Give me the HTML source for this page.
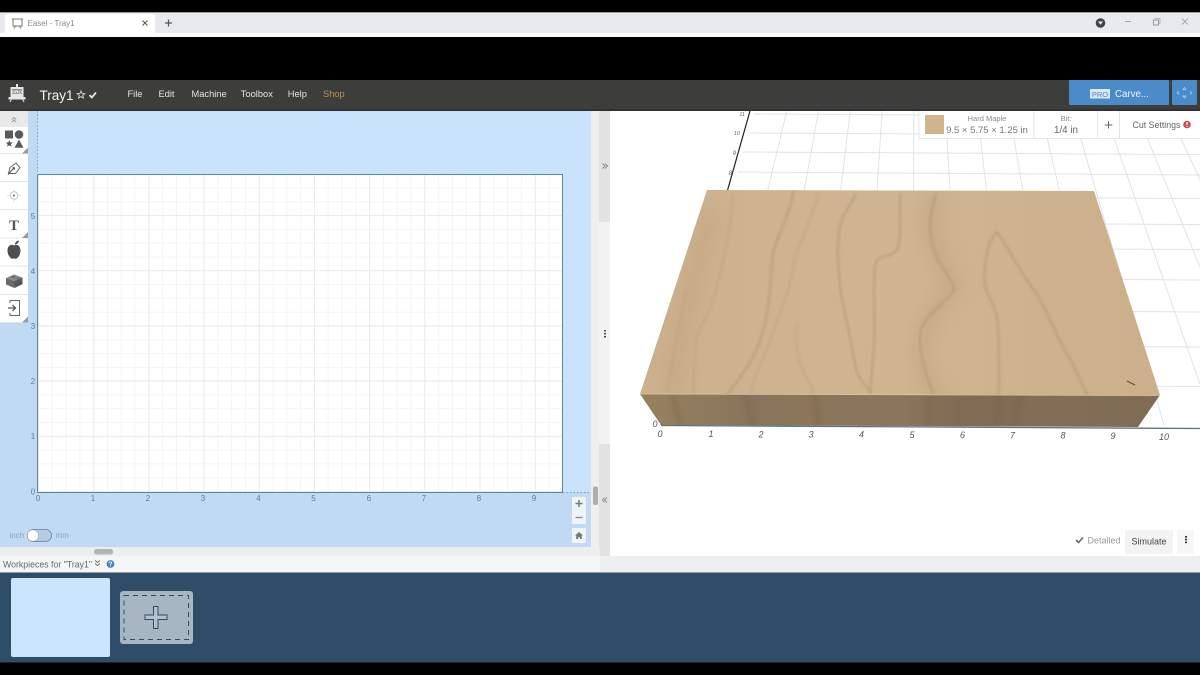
<!DOCTYPE html>
<html>
<head>
<meta charset="utf-8">
<style>
html,body{margin:0;padding:0;background:#000;width:1200px;height:675px;overflow:hidden}
svg{display:block;position:absolute;left:0;top:0}
text{font-family:"Liberation Sans",sans-serif}
#grid{position:absolute;left:38px;top:175px;width:524px;height:317px;background-color:#fff;
background-image:
linear-gradient(to right,#e9ebeb 1px,transparent 1px),
linear-gradient(to top,#e9ebeb 1px,transparent 1px),
linear-gradient(to right,#f4f5f5 1px,transparent 1px),
linear-gradient(to top,#f4f5f5 1px,transparent 1px);
background-size:55.2px 55.2px,55.2px 55.2px,13.8px 13.8px,13.8px 13.8px;
background-position:left bottom;
}
</style>
</head>
<body>
<svg width="1200" height="675" viewBox="0 0 1200 675" xmlns="http://www.w3.org/2000/svg">
<!-- browser chrome -->
<rect x="0" y="0" width="1200" height="12" fill="#000"/>
<rect x="0" y="12" width="1200" height="1.500" fill="#9a9a9c"/>
<rect x="0" y="13" width="1200" height="20" fill="#e8eaed"/>
<rect x="0" y="33" width="1200" height="4" fill="#fff"/>
<path d="M5 33V17q0-3 3-3H152q3 0 3 3V33z" fill="#fff"/>
<path d="M0 33h5V30q0 3-3 3z" fill="#fff"/>
<rect x="13" y="19" width="9" height="7" fill="none" stroke="#777" stroke-width="1"/>
<path d="M14 28.500l1.500-2.500M21 28.500l-1.500-2.500M12 19h11" stroke="#777" stroke-width="1" fill="none"/>
<text x="27.500" y="26" font-size="8" fill="#888">Easel - Tray1</text>
<path d="M142.500 20.500l5 5M147.500 20.500l-5 5" stroke="#555" stroke-width="1"/>
<path d="M168.500 19.500v7M165 23h7" stroke="#555" stroke-width="1.200"/>
<circle cx="1100.500" cy="23" r="4.800" fill="#444"/>
<path d="M1098 21.500h5l-2.500 3.200z" fill="#eee"/>
<path d="M1125 21.500h6" stroke="#aaa" stroke-width="1"/>
<rect x="1153.500" y="20" width="5" height="5" fill="none" stroke="#999" stroke-width="1"/>
<path d="M1155 20v-1.500h5v5h-1.500" fill="none" stroke="#aaa" stroke-width=".8"/>
<path d="M1182 18.500l6 6M1188 18.500l-6 6" stroke="#aaa" stroke-width="1"/>

<!-- app header -->
<rect x="0" y="80" width="1200" height="30" fill="#3d3d3b"/>
<rect x="0" y="109.500" width="1200" height="1.500" fill="#2c2e30"/>
<g>
<rect x="10.500" y="87" width="13" height="10" fill="#e6e6e6"/>
<rect x="12" y="89" width="10" height="5" fill="#8d8d8d"/>
<rect x="16" y="84" width="2" height="3" fill="#e6e6e6"/>
<path d="M9 97.500h16v1.500H9zM11.500 99l-1.500 3M22.500 99l1.500 3" stroke="#e6e6e6" stroke-width="1" fill="#e6e6e6"/>
<text x="17" y="93.300" font-size="4.500" font-weight="bold" fill="#fff" text-anchor="middle">PRO</text>
</g>
<text x="39.500" y="100" font-size="13.500" fill="#f4f4f4">Tray1</text>
<path d="M81 91l1.100 2.500 2.700.2-2.100 1.700.7 2.600-2.400-1.400-2.400 1.400.7-2.600-2.100-1.700 2.700-.2z" fill="none" stroke="#ddd" stroke-width=".9"/>
<path d="M89.500 95l2.300 2.500 4.200-5" fill="none" stroke="#e6e6e6" stroke-width="1.800"/>
<g font-size="9.300" fill="#e4e4e4">
<text x="127.500" y="97">File</text>
<text x="158.500" y="97">Edit</text>
<text x="191.500" y="97">Machine</text>
<text x="240.800" y="97">Toolbox</text>
<text x="287.800" y="97">Help</text>
<text x="323" y="97" fill="#b8935a">Shop</text>
</g>
<rect x="1069" y="80" width="100" height="25" rx="1" fill="#4a8bca"/>
<rect x="1090" y="89" width="20" height="9.500" fill="#dbe9f6"/>
<text x="1100" y="96.800" font-size="7.500" fill="#4a85bf" text-anchor="middle">PRO</text>
<text x="1115" y="97" font-size="9.700" fill="#f2f7fc">Carve...</text>
<rect x="1172" y="80" width="25" height="25" rx="1" fill="#4a8bca"/>
<path d="M1184.500 87.500l-1.500 2h3zM1184.500 98l-1.500-2h3zM1179 91l-1.800 1.700 1.800 1.700M1190 91l1.800 1.700-1.800 1.700" fill="none" stroke="#b4d0ea" stroke-width=".8"/>

<!-- left design area -->
<rect x="0" y="111" width="591" height="436" fill="#c0daf3"/>
<rect x="38" y="111" width="553" height="381" fill="#c9e3fd"/>
<rect x="0" y="111" width="28" height="212" fill="#fff"/>
</svg>

<div id="grid"></div>

<svg width="1200" height="675" viewBox="0 0 1200 675" xmlns="http://www.w3.org/2000/svg">
<defs>
<filter id="b1b" x="-10%" y="-10%" width="120%" height="120%"><feGaussianBlur stdDeviation="4"/></filter>
<filter id="b2b" x="-20%" y="-20%" width="140%" height="140%"><feGaussianBlur stdDeviation="25"/></filter>
<filter id="b3" x="-20%" y="-20%" width="140%" height="140%"><feGaussianBlur stdDeviation="2.500"/></filter>
<linearGradient id="topb" x1="0" y1="0" x2="1" y2="0">
<stop offset="0" stop-color="#cdb18e"/><stop offset=".5" stop-color="#d0b591"/><stop offset="1" stop-color="#ccb08c"/>
</linearGradient>
<linearGradient id="frontb" x1="0" y1="0" x2="1" y2="0">
<stop offset="0" stop-color="#97825f"/><stop offset=".12" stop-color="#8e7a5c"/><stop offset=".22" stop-color="#88745a"/><stop offset=".3" stop-color="#8b7659"/><stop offset=".5" stop-color="#8a765b"/><stop offset=".62" stop-color="#806c54"/><stop offset=".78" stop-color="#826e56"/><stop offset="1" stop-color="#7f6c54"/>
</linearGradient>
<clipPath id="topclipb"><polygon points="707,190 1094,191 1160,395 640,394"/></clipPath>
<clipPath id="frontclipb"><polygon points="640,394 1160,395 1138,427 661,425"/></clipPath>
<clipPath id="rightclipb"><rect x="610" y="111" width="590" height="445"/></clipPath>
</defs>

<!-- grid border & labels -->
<rect x="37.500" y="174.500" width="525" height="318" fill="none" stroke="#5a86a5" stroke-width="1"/>
<path d="M37.500 111V175" stroke="#7ba3c4" stroke-width="1" stroke-dasharray="1.500 2" fill="none"/>
<path d="M563 492.500H591" stroke="#7ba3c4" stroke-width="1" stroke-dasharray="1.500 2" fill="none"/>
<g font-size="8" fill="#5d7d98">
<text x="33" y="219" text-anchor="middle">5</text>
<text x="33" y="274" text-anchor="middle">4</text>
<text x="33" y="329" text-anchor="middle">3</text>
<text x="33" y="384" text-anchor="middle">2</text>
<text x="33" y="439" text-anchor="middle">1</text>
<text x="33" y="494.500" text-anchor="middle">0</text>
<text x="38" y="501" text-anchor="middle">0</text>
<text x="93" y="501" text-anchor="middle">1</text>
<text x="148" y="501" text-anchor="middle">2</text>
<text x="203" y="501" text-anchor="middle">3</text>
<text x="258.500" y="501" text-anchor="middle">4</text>
<text x="313.500" y="501" text-anchor="middle">5</text>
<text x="369" y="501" text-anchor="middle">6</text>
<text x="424" y="501" text-anchor="middle">7</text>
<text x="479" y="501" text-anchor="middle">8</text>
<text x="534" y="501" text-anchor="middle">9</text>
</g>

<!-- sidebar -->
<rect x="0" y="111" width="28" height="16" fill="#e9e9e9"/>
<path d="M11.800 119.500l2.200-2 2.200 2M11.800 122l2.200-2 2.200 2" fill="none" stroke="#999" stroke-width=".9"/>
<path d="M0 153.500h28M0 181.500h28M0 209.500h28M0 238h28M0 266h28M0 294.500h28M0 322.500h28" stroke="#e4e4e4" stroke-width="1"/>
<rect x="5" y="130.500" width="8" height="8" fill="#5a5a5c"/>
<circle cx="19" cy="134.500" r="4.300" fill="#5a5a5c"/>
<path d="M9.300 140l1 2.400 2.600.2-2 1.700.6 2.500-2.200-1.400-2.200 1.400.6-2.500-2-1.700 2.600-.2z" fill="#5a5a5c"/>
<path d="M19 139.500l4.500 8.300h-9z" fill="#5a5a5c"/>
<path d="M28 147.500v6h-6zM28 232v6h-6zM28 316.500v6h-6z" fill="#9a9a9a"/>
<path d="M8.500 173.500l1.500-6 6-4.500 4 4.500-4.500 6z" fill="none" stroke="#666" stroke-width="1"/>
<circle cx="13.800" cy="168.300" r="1.300" fill="#555"/>
<path d="M8 174.500l5-5.500" stroke="#555" stroke-width="1"/>
<circle cx="14" cy="195.500" r="3.800" fill="none" stroke="#bbb" stroke-width=".8"/>
<circle cx="14" cy="195.500" r="1" fill="#666"/>
<path d="M7 195.500h3M18 195.500h3M14 189v2.500M14 199.500v2.500" stroke="#ddd" stroke-width=".8"/>
<text x="14" y="230" font-size="15" font-weight="bold" fill="#555" text-anchor="middle" style="font-family:'Liberation Serif',serif">T</text>
<path d="M14 245.500c-2.200-1.300-6.500-.8-6.500 5.300 0 3.800 2.800 8 5 8 .8 0 1-.4 1.500-.4s.7.4 1.500.4c2.200 0 5-4.200 5-8 0-6.100-4.300-6.600-6.500-5.300z" fill="#4f4f51"/>
<path d="M14.800 244.500c.2-2.200 1.800-3.800 4.200-4-.1 2.200-1.800 3.800-4.200 4z" fill="#4f4f51"/>
<path d="M6 278l8-3.500 8.500 3-8 3.500z" fill="#8a8a8c"/>
<path d="M6 278v6.500l8.500 3.500v-7z" fill="#6a6a6c"/>
<path d="M22.500 277.500v6.800l-8 3.700v-7z" fill="#58585a"/>
<path d="M10 277l3-1.200 3 1-3 1.300zM15 278.500l2.500-1 2.500.9-2.500 1z" fill="#6a6a6c"/>
<path d="M10 303v-2.500h9.500v15H10V313" fill="none" stroke="#666" stroke-width="1"/>
<path d="M8 308h7M12.500 305l3 3-3 3" fill="none" stroke="#555" stroke-width="1.300"/>

<!-- toggle -->
<text x="9.500" y="538" font-size="8" fill="#8ba3ba">inch</text>
<rect x="27.500" y="529.500" width="24" height="12" rx="6" fill="#b4cde5" stroke="#6b7d8e" stroke-width=".8"/>
<circle cx="33" cy="535.500" r="5.800" fill="#fff" stroke="#6b7d8e" stroke-width=".5"/>
<text x="55.500" y="538" font-size="8" fill="#8ba3ba">mm</text>

<!-- zoom controls -->
<rect x="572" y="497" width="14" height="27" fill="#eff4f8"/>
<path d="M579 500v7M575.500 503.500h7" stroke="#777" stroke-width="1.500"/>
<path d="M575.500 517.500h7" stroke="#888" stroke-width="1.300"/>
<rect x="572" y="528" width="14" height="15" fill="#eff4f8"/>
<path d="M575 535.500l4-3.500 4 3.500h-1.200v3.500h-2v-2h-1.600v2h-2v-3.500z" fill="#777"/>

<!-- gutter -->
<rect x="591" y="111" width="8" height="445" fill="#efeff0"/>
<rect x="599" y="111" width="11" height="111" fill="#e2e2e2"/>
<rect x="599" y="222" width="11" height="222" fill="#f2f2f2"/>
<rect x="599" y="444" width="11" height="112" fill="#e2e2e2"/>
<rect x="593" y="486.500" width="5" height="18.500" rx="2" fill="#adadad"/>
<path d="M602.500 163.500l2.500 2.500-2.500 2.500M605 163.500l2.500 2.500-2.500 2.500" fill="none" stroke="#888" stroke-width=".9"/>
<path d="M607 497.500l-2.500 2.500 2.500 2.500M604.500 497.500l-2 2.500 2 2.500" fill="none" stroke="#888" stroke-width=".9"/>
<rect x="604" y="330" width="2" height="1.500" fill="#444"/><rect x="604" y="333" width="2" height="1.500" fill="#444"/><rect x="604" y="336" width="2" height="1.500" fill="#444"/>

<!-- right panel -->
<rect x="610" y="111" width="590" height="445" fill="#fff"/>
<g clip-path="url(#rightclipb)">
<g stroke="#dbe5e9" stroke-width="1" fill="none">
<path d="M754 114L1200 116.500"/><path d="M749 133L1200 135.500"/><path d="M743 152L1200 154.500"/><path d="M737 172L1200 175"/><path d="M730 196L1200 198.500"/><path d="M723 222L1200 224.500"/><path d="M716 247L1200 249.500"/><path d="M708 277L1200 280"/><path d="M698 309L1200 312"/><path d="M688 344L1200 347"/><path d="M677 383L1200 386.500"/>
<path d="M786.800 111L711.300 425"/><path d="M818.500 111L761.600 425"/><path d="M850.300 111L811.900 425"/><path d="M882.100 111L862.200 425"/><path d="M913.900 111L912.500 425"/><path d="M945.600 111L962.800 425"/><path d="M977.400 111L1013.100 425"/><path d="M1009.200 111L1063.400 425"/><path d="M1040.900 111L1113.700 425"/><path d="M1072.700 111L1164 425"/><path d="M1104.500 111L1214.300 425"/><path d="M1136.200 111L1264.600 425"/><path d="M1168 111L1314.900 425"/><path d="M1199.800 111L1365.200 425"/>
</g>
<path d="M750 111L661 425" stroke="#222" stroke-width="1.200" fill="none"/>
<path d="M661 425.500L1200 428.500" stroke="#5c7080" stroke-width="1.300" fill="none"/>
</g>
<g font-size="6" font-style="italic" fill="#666">
<text x="745" y="116" text-anchor="end" font-size="5.500">11</text>
<text x="740" y="135" text-anchor="end" font-size="5.500">10</text>
<text x="736" y="155" text-anchor="end">9</text>
<text x="732" y="175" text-anchor="end">8</text>
</g>

<!-- block -->
<polygon points="707,190 1094,191 1160,395 640,394" fill="url(#topb)"/>
<g clip-path="url(#topclipb)">
<g transform="translate(640 110) scale(.357 .3333)" fill="none">
<g stroke="#bc9e79" stroke-width="50" opacity=".4" filter="url(#b2b)">
<path d="M830 250C800 340 820 420 880 530C830 590 780 660 790 750S820 820 830 870"/>
<path d="M200 300C170 450 120 600 90 850"/>
</g>
<g stroke="#a98a66" stroke-width="5" opacity=".55" filter="url(#b1b)">
<path d="M430 240C425 300 385 380 375 420C365 480 370 540 350 640S290 790 240 860"/>
<path d="M605 250C590 290 565 310 558 360S555 500 565 560S590 680 600 750S630 810 645 850"/>
<path d="M730 250C725 300 735 380 720 420C705 445 670 430 660 460C650 520 660 650 655 720S645 800 645 860"/>
<path d="M830 250C800 340 815 400 830 440S880 510 880 540C850 590 790 620 785 670C780 720 800 800 825 860"/>
<path d="M1000 365C975 390 965 450 965 510C970 570 1000 580 1003 650S1005 790 1005 860"/>
<path d="M1000 365C1030 410 1060 480 1110 550C1150 620 1170 690 1195 730S1240 830 1255 860"/>
</g>
<g stroke="#b0926e" stroke-width="4" opacity=".4" filter="url(#b1b)">
<path d="M260 250C255 350 240 420 215 530S160 640 155 720S150 820 150 860"/>
<path d="M500 250C480 340 440 400 430 470S380 640 365 690S320 790 310 850"/>
<path d="M440 640C430 700 445 770 470 810S480 850 480 860"/>
<path d="M130 540C110 640 90 750 75 850"/>
</g>
</g>
<path d="M1127 381l8 4" stroke="#5e4c3a" stroke-width="1" fill="none"/>
</g>
<polygon points="640,394 1160,395 1138,427 661,425" fill="url(#frontb)"/>
<g clip-path="url(#frontclipb)" fill="none" stroke="#705d47" opacity=".3" filter="url(#b3)">
<path d="M672 394l9 32M745 394l8 32M815 394l3 32M930 394l-1 32M1000 394l-4 32M1020 394l-4 32" stroke-width="5"/>
</g>
<path d="M640 394L1160 395.500" stroke="#dcc6a8" stroke-width=".8" fill="none"/>

<!-- bottom axis labels -->
<g font-size="9" font-style="italic" fill="#555" text-anchor="middle">
<text x="655" y="427">0</text>
<text x="660" y="437">0</text>
<text x="711" y="437">1</text>
<text x="761" y="437.500">2</text>
<text x="811" y="437.500">3</text>
<text x="861.500" y="437.500">4</text>
<text x="912" y="438">5</text>
<text x="962.500" y="438">6</text>
<text x="1012.500" y="438.500">7</text>
<text x="1063" y="438.500">8</text>
<text x="1113" y="439">9</text>
<text x="1164" y="440">10</text>
</g>

<!-- material panel -->
<rect x="919" y="111" width="281" height="27.500" fill="#fff"/>
<path d="M919 111v27.500h281M1034 111v27.500M1097.500 111v27.500M1119.500 111v27.500" fill="none" stroke="#e6e6e6" stroke-width="1"/>
<rect x="925" y="115" width="19" height="19" fill="#d1b58f"/>
<text x="987" y="121" font-size="7.500" fill="#8a8a8a" text-anchor="middle">Hard Maple</text>
<text x="987" y="133" font-size="9.500" fill="#777" text-anchor="middle">9.5 × 5.75 × 1.25 in</text>
<text x="1066" y="121" font-size="7.500" fill="#8a8a8a" text-anchor="middle">Bit:</text>
<text x="1066" y="133" font-size="9.800" fill="#666" text-anchor="middle">1/4 in</text>
<path d="M1108.500 121v7.500M1104.800 125h7.500" stroke="#666" stroke-width="1"/>
<text x="1132.500" y="128" font-size="8.800" fill="#666">Cut Settings</text>
<circle cx="1187" cy="124.500" r="3.800" fill="#c9504c"/>
<rect x="1186.500" y="122" width="1.100" height="3" fill="#fff"/><rect x="1186.500" y="125.800" width="1.100" height="1" fill="#fff"/>

<!-- simulate -->
<path d="M1076 540l2.500 2.500 4.500-5" fill="none" stroke="#666" stroke-width="1.600"/>
<text x="1087.500" y="543.500" font-size="9" fill="#999">Detailed</text>
<rect x="1125" y="530" width="48" height="24" rx="1" fill="#f3f3f3"/>
<text x="1149" y="544.500" font-size="9" fill="#444" text-anchor="middle">Simulate</text>
<rect x="1177" y="530" width="17" height="24" rx="1" fill="#f7f7f7"/>
<rect x="1185" y="536" width="2" height="1.600" fill="#333"/><rect x="1185" y="538.800" width="2" height="1.600" fill="#333"/><rect x="1185" y="541.600" width="2" height="1.600" fill="#333"/>

<!-- bottom bands -->
<rect x="0" y="547" width="600" height="9" fill="#eeeeef"/>
<rect x="94" y="549" width="19" height="5.500" rx="2.500" fill="#b4b4b4"/>
<rect x="0" y="556" width="1200" height="17" fill="#eeeff0"/>
<rect x="0" y="556" width="600" height="16" fill="#f6f6f6"/>
<text x="3" y="567.500" font-size="9" fill="#666" textLength="89" lengthAdjust="spacingAndGlyphs">Workpieces for "Tray1"</text>
<path d="M95 560.500l2.500 2 2.500-2M95 563.500l2.500 2 2.500-2" fill="none" stroke="#666" stroke-width=".9"/>
<circle cx="110.500" cy="564" r="3.900" fill="#3f83bf"/>
<text x="110.500" y="566.700" font-size="7" font-weight="bold" fill="#fff" text-anchor="middle">?</text>

<!-- workpieces -->
<rect x="0" y="572.500" width="1200" height="90" fill="#2f4d69"/>
<rect x="11" y="578" width="99" height="79" rx="2" fill="#cbe5ff"/>
<rect x="120" y="591" width="73" height="53" rx="3" fill="#a8b6c3"/>
<rect x="124" y="595.500" width="64.500" height="44" fill="none" stroke="#2f4d69" stroke-width="1" stroke-dasharray="5 4"/>
<path d="M153.500 606.500h4.500v8.500h9v4.500h-9v9h-4.500v-9h-8.500v-4.500h8.500z" fill="#b5c0cb" stroke="#2f4d69" stroke-width="1"/>
<rect x="0" y="662.500" width="1200" height="12.500" fill="#000"/>
</svg>
</body>
</html>
